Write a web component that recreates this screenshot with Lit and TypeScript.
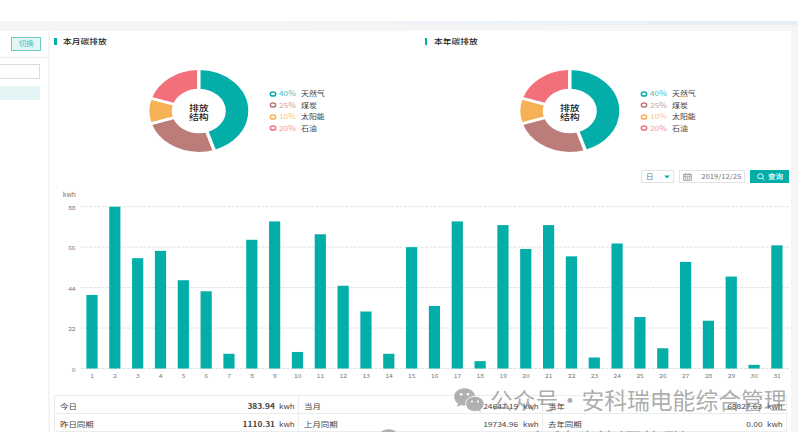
import { css, html, LitElement, svg } from "lit";
import { customElement, property } from "lit/decorators.js";
import { classMap } from "lit/directives/class-map.js";

interface Share {
  label: string;
  percent: number;
  // Part of the ring, differs from the printed percentage
  arc: number;
  color: string;
}

interface Total {
  label: string;
  value: string;
  strong?: boolean;
}

const SHARES: Share[] = [
  { label: "天然气", percent: 40, arc: 45, color: "#03aea9" },
  { label: "煤炭", percent: 25, arc: 25, color: "#bb7c7a" },
  { label: "太阳能", percent: 10, arc: 10, color: "#f6b157" },
  { label: "石油", percent: 20, arc: 20, color: "#f27079" },
];

const DAYS = [
  40, 88, 60, 64, 48, 42, 8, 70, 80, 9, 73, 45, 31, 8, 66, 34, 80, 4, 78, 65,
  78, 61, 6, 68, 28, 11, 58, 26, 50, 2, 67,
];

const TOTALS: Total[] = [
  { label: "今日", value: "383.94", strong: true },
  { label: "当月", value: "24647.19" },
  { label: "当年", value: "68827.63" },
  { label: "昨日同期", value: "1110.31", strong: true },
  { label: "上月同期", value: "19734.96" },
  { label: "去年同期", value: "0.00" },
];

@customElement("emission-donut")
class EmissionDonut extends LitElement {
  @property({ attribute: false }) public shares: Share[] = [];

  protected render() {
    let start = 0;
    const slices = this.shares.map((share) => {
      const offset = start;
      start += share.arc;
      return { ...share, offset };
    });

    return html`
      <svg class="ring" viewBox="-42 -42 84 84" preserveAspectRatio="none">
        <g transform="rotate(-90)">
          ${slices.map(
            (s) => svg`
              <circle r="31.6" fill="none" stroke=${s.color} stroke-width="18.6"
                pathLength="100" stroke-dasharray="${s.arc} ${100 - s.arc}"
                stroke-dashoffset=${-s.offset}></circle>`
          )}
          ${slices.map(
            (s) => svg`
              <line x1="18" x2="42" stroke="#fff" stroke-width="2.9"
                transform="rotate(${s.offset * 3.6})"></line>`
          )}
        </g>
        <text class="center" y="-0.4">排放</text>
        <text class="center" y="9.4">结构</text>
      </svg>
      <div class="legend">
        ${this.shares.map(
          (s) => html`
            <div class="item" style="color: ${s.color}">
              <svg class="dot" viewBox="0 0 8 6">
                <ellipse cx="4" cy="3" rx="2.7" ry="2.1"></ellipse>
              </svg>
              <span class="percent">${s.percent}%</span>
              <span class="label">${s.label}</span>
            </div>
          `
        )}
      </div>
    `;
  }

  static styles = css`
    :host {
      display: flex;
      align-items: flex-start;
      font-size: 7px;
    }

    .ring {
      width: 101.6px;
      height: 84px;
    }

    .center {
      font-size: 8.2px;
      font-weight: 500;
      text-anchor: middle;
      fill: #222;
    }

    .legend {
      margin: 19.2px 0 0 19.6px;
    }

    .item {
      display: flex;
      align-items: center;
      height: 11.5px;
      line-height: 11.5px;
      white-space: nowrap;
    }

    .dot {
      width: 8px;
      height: 6px;
      fill: none;
      stroke: currentColor;
      stroke-width: 1.5;
    }

    .percent {
      width: 22.2px;
      margin-left: 1.8px;
      transform: scaleX(1.18);
      transform-origin: left;
      opacity: 0.75;
    }

    .label {
      color: #444;
      transform: scaleX(1.13);
      transform-origin: left;
    }
  `;
}

@customElement("day-chart")
class DayChart extends LitElement {
  @property({ attribute: false }) public values: number[] = [];

  protected render() {
    const base = 181.5;
    const unit = 1.8386;

    return html`
      <svg width="741" height="203" viewBox="0 0 741 203">
        <text transform="translate(12.7 9.8) scale(1.2 1)">kwh</text>
        ${[0, 22, 44, 66, 88].map((tick) => {
          const y = base - tick * unit;
          return svg`
            <line class="grid" x1="30.6" x2="739" y1=${y} y2=${y}></line>
            <text class="tick" transform="translate(25.6 ${y + 3}) scale(1.2 1)">${tick}</text>`;
        })}
        ${this.values.map((value, i) => {
          const x = 42 + i * 22.83;
          return svg`
            <rect class="bar" x=${x - 5.6} y=${base - value * unit}
              width="11.2" height=${value * unit}></rect>
            <text class="day" transform="translate(${x + 0.2} 191) scale(1.2 1)">${i + 1}</text>`;
        })}
      </svg>
    `;
  }

  static styles = css`
    :host {
      display: block;
    }

    svg {
      display: block;
    }

    text {
      font-size: 5.6px;
      fill: #777;
    }

    .tick {
      text-anchor: end;
    }

    .day {
      text-anchor: middle;
    }

    .grid {
      stroke: #dedede;
      stroke-width: 0.9;
      stroke-dasharray: 3 1.2;
    }

    .bar {
      fill: #03aea9;
    }
  `;
}

@customElement("app-root")
class AppRoot extends LitElement {
  protected render() {
    return html`
      <div class="topbar"></div>
      <div class="strip"></div>
      <div class="body">
        <aside>
          <div class="switch-row">
            <div class="switch"><span class="wide mid">切换</span></div>
          </div>
          <div class="search"></div>
          <div class="selected"></div>
        </aside>
        <main>
          <div class="donuts">
            ${["本月碳排放", "本年碳排放"].map(
              (title) => html`
                <section>
                  <h2><span class="wide">${title}</span></h2>
                  <emission-donut .shares=${SHARES}></emission-donut>
                </section>
              `
            )}
          </div>
          <div class="filters">
            <div class="select">
              <span class="wide">日</span>
              <svg width="6" height="4" viewBox="0 0 6 4">
                <path d="M0.2 0.4h5.6L3 3.4z" fill="#03aea9"></path>
              </svg>
            </div>
            <div class="date">
              <svg width="9" height="8" viewBox="0 0 9 8">
                <path
                  d="M.7 1.3h7.6v6H.7zM.7 3.2h7.6M2.6.2v1.8M6.4.2v1.8M2 4.6h1.2M3.9 4.6h1.2M5.8 4.6H7M2 6h1.2M3.9 6h1.2M5.8 6H7"
                ></path>
              </svg>
              <span class="wide end">2019/12/25</span>
            </div>
            <div class="query">
              <svg width="8" height="8" viewBox="0 0 8 8">
                <ellipse cx="3.5" cy="3.3" rx="2.8" ry="2.5"></ellipse>
                <path d="M5.5 5.2l2 1.9"></path>
              </svg>
              <span class="wide">查询</span>
            </div>
          </div>
          <day-chart .values=${DAYS}></day-chart>
          <div class="totals">
            ${TOTALS.map(
              (t) => html`
                <div class="cell">
                  <span class="wide">${t.label}</span>
                  <span
                    class=${classMap({
                      wide: true,
                      end: true,
                      value: true,
                      strong: !!t.strong,
                    })}
                    >${t.value}</span
                  >
                  <span class="wide unit">kwh</span>
                </div>
              `
            )}
          </div>
        </main>
      </div>
      ${this._renderWatermark("first", "公众号 · 安科瑞电能综合管理")}
      ${this._renderWatermark("second", "安科瑞能源物联网")}
    `;
  }

  private _renderWatermark(name: string, text: string) {
    return html`
      <div class="watermark ${name}">
        <svg width="31" height="25" viewBox="0 0 31 25">
          <path
            d="M10.6.3C4.8.3.2 4.1.2 8.9c0 2.7 1.5 5 3.8 6.6l-1 3.4 3.8-2c1.2.4 2.4.6 3.9.6 5.8 0 10.4-3.8 10.4-8.6S16.4.3 10.6.3z"
          ></path>
          <path
            d="M20.9 8.3c-5.1 0-9.2 3.4-9.2 7.6s4.1 7.6 9.2 7.6c1.2 0 2.3-.2 3.3-.5l3.3 1.7-.8-2.9c2-1.4 3.4-3.5 3.4-5.9 0-4.2-4.1-7.6-9.2-7.6z"
            stroke="#fff"
            stroke-width=".9"
          ></path>
          <g fill="#fff">
            <circle cx="7.2" cy="6.3" r="1.3"></circle>
            <circle cx="14" cy="6.3" r="1.3"></circle>
            <circle cx="17.9" cy="13.5" r="1.1"></circle>
            <circle cx="24" cy="13.5" r="1.1"></circle>
          </g>
        </svg>
        <span>${text}</span>
      </div>
    `;
  }

  static styles = css`
    :host {
      display: block;
      position: relative;
      width: 812px;
      height: 432px;
      overflow: hidden;
      background: #fff;
      font-family: "Noto Sans CJK SC", sans-serif;
      font-size: 7px;
      color: #444;
    }

    * {
      box-sizing: border-box;
    }

    .topbar {
      height: 21px;
    }

    .strip {
      width: 798px;
      height: 4px;
      background: linear-gradient(90deg, #f4f5f6 30%, #edf2f7 60%, #e7eef7);
    }

    .body {
      display: flex;
      gap: 2px;
      width: 798px;
      height: 407px;
      padding-top: 6px;
      background: #f5f5f5;
    }

    .wide {
      display: inline-block;
      white-space: nowrap;
      transform: scaleX(1.2);
      transform-origin: left;
    }

    .wide.mid {
      transform-origin: center;
    }

    .wide.end {
      transform-origin: right;
    }

    aside {
      width: 48px;
      background: #fff;
    }

    .switch-row {
      display: flex;
      height: 27px;
      padding: 6px 0 0 11px;
      border-bottom: 1px solid #eee;
    }

    .switch {
      display: flex;
      align-items: center;
      justify-content: center;
      width: 30px;
      height: 13.5px;
      border: 1px solid #6ccac7;
      background: #e3f5f4;
      color: #45bbb7;
      font-size: 6.3px;
    }

    .search {
      width: 41px;
      height: 15px;
      margin: 6px 0 0 -1px;
      border: 1px solid #dcdcdc;
    }

    .selected {
      width: 40px;
      height: 14px;
      margin-top: 6.5px;
      background: #e3f5f4;
    }

    main {
      width: 741px;
      background: #fff;
    }

    .donuts {
      display: grid;
      grid-template-columns: 370.7px 370px;
      height: 139px;
    }

    h2 {
      display: flex;
      align-items: center;
      height: 20px;
      margin: 0;
      padding-left: 4.3px;
      font-size: 7.3px;
      font-weight: 500;
      color: #222;
    }

    h2::before {
      content: "";
      width: 2.4px;
      height: 7px;
      margin-right: 6.3px;
      background: #03aea9;
    }

    emission-donut {
      margin: 18px 0 0 97.9px;
    }

    .filters {
      display: flex;
      justify-content: flex-end;
      height: 17px;
      padding-right: 2.3px;
      line-height: 11px;
      color: #777;
    }

    .select,
    .date {
      display: flex;
      align-items: center;
      justify-content: space-between;
      height: 13px;
      padding: 0 4px;
      border: 1px solid #e4e4e4;
    }

    .select {
      width: 33px;
      margin-right: 5px;
      padding-right: 3px;
      font-size: 6.3px;
    }

    .date {
      width: 66px;
      margin-right: 5px;
      padding: 0 3px;
      font-size: 6.4px;
    }

    .date svg {
      fill: none;
      stroke: #888;
      stroke-width: 0.8;
    }

    .query {
      display: flex;
      align-items: center;
      gap: 3px;
      width: 38.7px;
      height: 13px;
      padding-left: 6.5px;
      background: #03aea9;
      color: #fff;
      font-size: 6.3px;
      font-weight: 500;
    }

    .query svg {
      fill: none;
      stroke: #fff;
      stroke-width: 0.9;
    }

    .totals {
      display: grid;
      grid-template-columns: 244px 244px 244px;
      grid-auto-rows: 18.2px;
      width: 733px;
      margin: 5px 0 0 4.2px;
      border: solid #ececec;
      border-width: 1px 0 0 1px;
    }

    .cell {
      display: flex;
      align-items: center;
      padding: 2px 4px 0 5.2px;
      border: solid #ececec;
      border-width: 0 1px 1px 0;
    }

    .value {
      margin-left: auto;
    }

    .strong {
      font-weight: 700;
    }

    .unit {
      width: 15.2px;
      margin-left: 4.4px;
      font-size: 6.7px;
    }

    .watermark {
      position: absolute;
      display: flex;
      line-height: 24px;
      font-size: 22.8px;
      word-spacing: -5px;
      white-space: pre;
      color: rgba(120, 120, 120, 0.62);
    }

    .watermark svg {
      fill: #b0b0b0;
    }

    .first {
      left: 454px;
      top: 388px;
      gap: 5px;
    }

    .second {
      left: 378px;
      top: 429px;
      gap: 118px;
    }
  `;
}
